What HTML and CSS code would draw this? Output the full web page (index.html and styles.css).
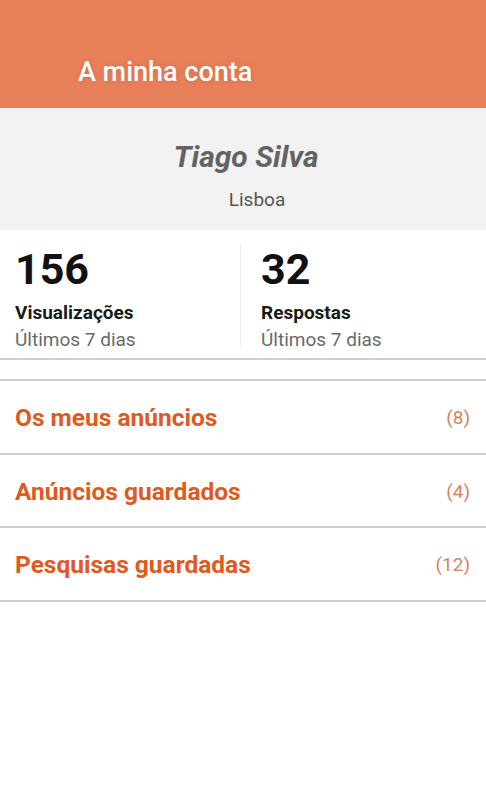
FILE: index.html
```html
<!DOCTYPE html>
<html lang="pt">

<head>
    <meta charset="UTF-8" />
    <meta name="viewport" content="width=device-width, initial-scale=1.0" />
    <title>A minha conta</title>
    <link rel="stylesheet" href="styles.css">
</head>

<body>
    <div class="header">
        <h1>A minha conta</h1>
    </div>
    <div class="profile">
        <h2>Tiago Silva</h2>
        <p class="city">Lisboa</p>
    </div>
    <div class="stats">
        <div class="stat">
            <span class="num">156</span>
            <span class="label">Visualizações</span>
            <span class="period">Últimos 7 dias</span>
        </div>
        <div class="stat second">
            <span class="num">32</span>
            <span class="label">Respostas</span>
            <span class="period">Últimos 7 dias</span>
        </div>
    </div>
    <div class="list">
        <a class="row" href="#"><span>Os meus anúncios</span><span class="count">(8)</span></a>
        <a class="row" href="#"><span>Anúncios guardados</span><span class="count">(4)</span></a>
        <a class="row" href="#"><span>Pesquisas guardadas</span><span class="count">(12)</span></a>
    </div>
</body>

</html>
```

FILE: styles.css
```css
* {
    margin: 0;
    padding: 0;
    box-sizing: border-box;
    font-family: Roboto, 'Liberation Sans', sans-serif;
}

body {
    background-color: white;
}

.header {
    height: 108px;
    background-color: #e8805a;
    display: flex;
    align-items: flex-end;
    padding: 0 0 20px 78px;
}

h1 {
    font-size: 27px;
    font-weight: 500;
    color: white;
    text-shadow: 0 0 5px rgba(200, 90, 50, 0.5);
}

.profile {
    height: 122px;
    background-color: #f2f2f2;
    display: flex;
    flex-direction: column;
    align-items: center;
    padding-top: 32px;
}

h2 {
    font-size: 30px;
    font-style: italic;
    font-weight: 700;
    color: #636363;
    padding-left: 6px;
    line-height: 34px;
}

.city {
    font-size: 19px;
    color: #555;
    margin-top: 14px;
    padding-left: 28px;
}

.stats {
    display: flex;
    height: 130px;
    border-bottom: 2px solid #cfcfcf;
    padding-top: 14px;
}

.stat {
    flex: 1;
    display: flex;
    flex-direction: column;
    padding-left: 15px;
    height: 102px;
}

.stat.second {
    border-left: 1px solid #ececec;
    padding-left: 20px;
}

.num {
    font-size: 43px;
    font-weight: 700;
    color: #111;
    line-height: 50px;
}

.label {
    font-size: 19px;
    font-weight: 700;
    color: #1a1a1a;
    margin-top: 7px;
}

.period {
    font-size: 19px;
    color: #6a6a6a;
    margin-top: 4px;
}

.list {
    margin-top: 19px;
    border-top: 2px solid #cfcfcf;
}

.row {
    display: flex;
    justify-content: space-between;
    align-items: center;
    height: 73.5px;
    padding: 2px 16px 0 15px;
    border-bottom: 2px solid #cfcfcf;
    text-decoration: none;
    font-size: 24.5px;
    font-weight: 700;
    color: #e05a1f;
}

.count {
    font-size: 19px;
    font-weight: 400;
    color: #d8825e;
}
```
